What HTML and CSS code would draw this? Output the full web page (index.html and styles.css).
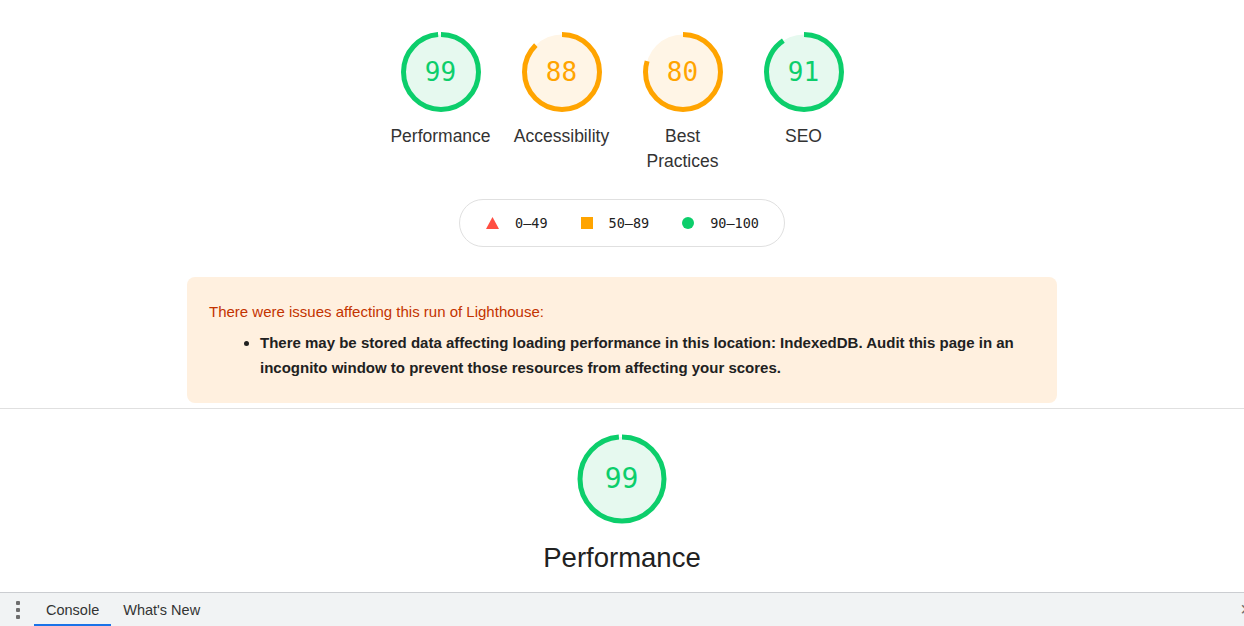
FILE: index.html
```html
<!DOCTYPE html>
<html>
<head>
<meta charset="utf-8">
<link rel="stylesheet" href="styles.css">
</head>
<body>
<div class="report">
  <div class="gauges">
    <div class="gauge">
      <svg class="ring" viewBox="0 0 80 80" width="80" height="80">
        <circle class="bg pass" cx="40" cy="40" r="37.5"/>
        <circle class="arc pass" cx="40" cy="40" r="37.5" transform="rotate(-90 40 40)" style="stroke-dasharray: 232.3 236"/>
      </svg>
      <div class="num pass-t">99</div>
      <div class="label">Performance</div>
    </div>
    <div class="gauge">
      <svg class="ring" viewBox="0 0 80 80" width="80" height="80">
        <circle class="bg avg" cx="40" cy="40" r="37.5"/>
        <circle class="arc avg" cx="40" cy="40" r="37.5" transform="rotate(-90 40 40)" style="stroke-dasharray: 206.3 236"/>
      </svg>
      <div class="num avg-t">88</div>
      <div class="label">Accessibility</div>
    </div>
    <div class="gauge">
      <svg class="ring" viewBox="0 0 80 80" width="80" height="80">
        <circle class="bg avg" cx="40" cy="40" r="37.5"/>
        <circle class="arc avg" cx="40" cy="40" r="37.5" transform="rotate(-90 40 40)" style="stroke-dasharray: 187.5 236"/>
      </svg>
      <div class="num avg-t">80</div>
      <div class="label">Best<br>Practices</div>
    </div>
    <div class="gauge">
      <svg class="ring" viewBox="0 0 80 80" width="80" height="80">
        <circle class="bg pass" cx="40" cy="40" r="37.5"/>
        <circle class="arc pass" cx="40" cy="40" r="37.5" transform="rotate(-90 40 40)" style="stroke-dasharray: 213.4 236"/>
      </svg>
      <div class="num pass-t">91</div>
      <div class="label">SEO</div>
    </div>
  </div>

  <div class="legend-wrap">
    <div class="legend">
      <span class="item"><svg width="13" height="12" viewBox="0 0 13 12"><polygon points="6.5,0 13,12 0,12" fill="#ff4e42"/></svg><span>0–49</span></span>
      <span class="item"><span class="sq"></span><span>50–89</span></span>
      <span class="item"><span class="dot"></span><span>90–100</span></span>
    </div>
  </div>

  <div class="warning">
    <div class="warn-title">There were issues affecting this run of Lighthouse:</div>
    <ul>
      <li>There may be stored data affecting loading performance in this location: IndexedDB. Audit this page in an incognito window to prevent those resources from affecting your scores.</li>
    </ul>
  </div>

  <div class="divider"></div>

  <div class="section">
    <div class="big-gauge">
      <svg viewBox="0 0 90 90" width="90" height="90">
        <circle class="bg pass" cx="45" cy="45" r="42"/>
        <circle class="arc pass" cx="45" cy="45" r="42" transform="rotate(-90 45 45)" style="stroke-dasharray: 260.3 264"/>
      </svg>
      <div class="big-num pass-t">99</div>
    </div>
    <div class="big-title">Performance</div>
  </div>
</div>

<div class="drawer">
  <div class="menu"><span></span><span></span><span></span></div>
  <div class="tab active">Console</div>
  <div class="tab">What's New</div>
  <div class="spacer"></div>
  <div class="close">×</div>
</div>
</body>
</html>
```
FILE: styles.css
```css
* { box-sizing: border-box; }
html, body { margin: 0; padding: 0; }
body {
  width: 1244px;
  height: 626px;
  overflow: hidden;
  background: #fff;
  font-family: "Liberation Sans", Arial, sans-serif;
  color: #212121;
  display: flex;
  flex-direction: column;
}
.report { flex: 1; overflow: hidden; }

.gauges {
  display: flex;
  justify-content: center;
  padding-top: 32px;
}
.gauge {
  width: 121px;
  display: flex;
  flex-direction: column;
  align-items: center;
  position: relative;
}
.ring { display: block; }
.bg { stroke: none; }
.bg.pass { fill: #e6f9ef; }
.bg.avg { fill: #fff5e6; }
.arc { fill: none; stroke-width: 5; }
.arc.pass { stroke: #0cce6b; }
.arc.avg { stroke: #ffa400; }
.pass-t { color: #0cce6b; }
.avg-t { color: #ffa400; }
.num {
  position: absolute;
  top: 0;
  left: 0;
  right: 0;
  height: 80px;
  line-height: 80px;
  text-align: center;
  font-family: "DejaVu Sans Mono", "Liberation Mono", monospace;
  font-size: 26px;
}
.label {
  margin-top: 12px;
  font-size: 17.5px;
  line-height: 25px;
  text-align: center;
  color: #333;
}

.legend-wrap {
  display: flex;
  justify-content: center;
  margin-top: 25px;
}
.legend {
  width: 326px;
  height: 48px;
  border: 1px solid #e0e0e0;
  border-radius: 24px;
  display: flex;
  align-items: center;
  justify-content: center;
  gap: 33px;
  padding-left: 1px;
  font-family: "DejaVu Sans Mono", "Liberation Mono", monospace;
  font-size: 13.5px;
  color: #212121;
}
.item { display: flex; align-items: center; gap: 16px; }
.sq { width: 12px; height: 12px; background: #ffa400; display: inline-block; }
.dot { width: 12px; height: 12px; border-radius: 50%; background: #0cce6b; display: inline-block; }

.warning {
  margin: 30px auto 0;
  width: 870px;
  height: 126px;
  background: #fff0df;
  border-radius: 8px;
  padding: 25px 22px 0 22px;
}
.warn-title {
  color: #c33300;
  font-size: 15px;
  line-height: 20px;
}
.warning ul {
  margin: 8px 0 0;
  padding-left: 51px;
}
.warning li {
  font-weight: bold;
  font-size: 15px;
  line-height: 25px;
  color: #212121;
}

.divider {
  margin-top: 5px;
  height: 1px;
  background: #e0e0e0;
}

.section {
  display: flex;
  flex-direction: column;
  align-items: center;
  padding-top: 25px;
}
.big-gauge { position: relative; width: 90px; height: 90px; margin-left: -1px; }
.big-gauge svg { display: block; }
.big-num {
  position: absolute;
  inset: 0;
  line-height: 90px;
  text-align: center;
  font-family: "DejaVu Sans Mono", "Liberation Mono", monospace;
  font-size: 28px;
}
.big-title {
  margin-top: 17px;
  font-size: 27.5px;
  line-height: 34px;
  color: #212121;
}

.drawer {
  height: 34px;
  flex: none;
  background: #f1f3f4;
  border-top: 1px solid #cbcdd1;
  display: flex;
  align-items: stretch;
  font-size: 14.5px;
  color: #333;
}
.menu {
  width: 34px;
  display: flex;
  flex-direction: column;
  align-items: center;
  justify-content: center;
  gap: 3px;
  padding-left: 2px;
}
.menu span { width: 4px; height: 4px; background: #6e6e6e; display: block; border-radius: 1px; }
.tab {
  display: flex;
  align-items: center;
  padding: 0 12px;
  border-bottom: 2px solid transparent;
  padding-top: 2px;
}
.tab.active { border-bottom-color: #1a73e8; color: #333; }
.spacer { flex: 1; }
.close {
  display: flex;
  align-items: center;
  font-size: 20px;
  color: #6e6e6e;
  margin-right: -8px;
}
```
